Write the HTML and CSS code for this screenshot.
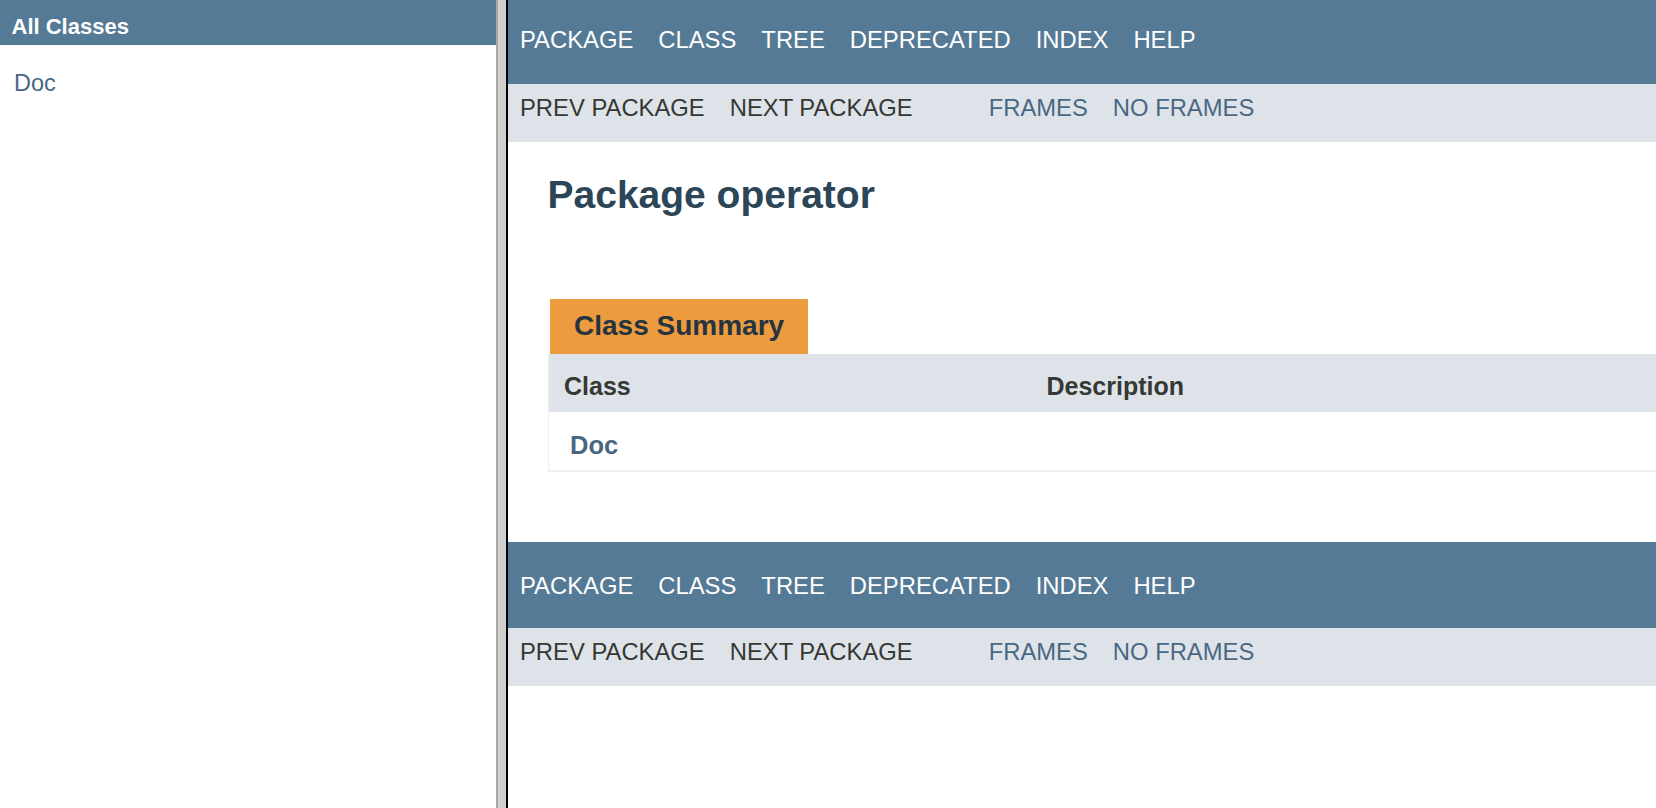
FILE: index.html
```html
<!DOCTYPE html>
<html lang="en">
<head>
<meta charset="utf-8">
<title>operator</title>
<link rel="stylesheet" href="styles.css">
</head>
<body>
<div class="frames">
  <aside class="left">
    <h1 class="bar">All Classes</h1>
    <ul class="classlist">
      <li><a href="#">Doc</a></li>
    </ul>
  </aside>
  <div class="divider"></div>
  <main class="right">
    <div class="topNav">
      <ul class="navList">
        <li><a href="#">Package</a></li>
        <li><a href="#">Class</a></li>
        <li><a href="#">Tree</a></li>
        <li><a href="#">Deprecated</a></li>
        <li><a href="#">Index</a></li>
        <li><a href="#">Help</a></li>
      </ul>
    </div>
    <div class="subNav">
      <ul class="navList">
        <li>Prev Package</li>
        <li>Next Package</li>
      </ul>
      <ul class="navList frames-list">
        <li><a href="#">Frames</a></li>
        <li><a href="#">No Frames</a></li>
      </ul>
    </div>
    <div class="header">
      <h1 class="title">Package operator</h1>
    </div>
    <div class="contentContainer">
      <div class="caption">Class Summary</div>
      <table class="summary">
        <colgroup><col class="c1"><col></colgroup>
        <thead>
          <tr><th>Class</th><th>Description</th></tr>
        </thead>
        <tbody>
          <tr><td class="colFirst"><a href="#">Doc</a></td><td></td></tr>
        </tbody>
      </table>
    </div>
    <div class="bottomNav">
      <ul class="navList">
        <li><a href="#">Package</a></li>
        <li><a href="#">Class</a></li>
        <li><a href="#">Tree</a></li>
        <li><a href="#">Deprecated</a></li>
        <li><a href="#">Index</a></li>
        <li><a href="#">Help</a></li>
      </ul>
    </div>
    <div class="subNav">
      <ul class="navList">
        <li>Prev Package</li>
        <li>Next Package</li>
      </ul>
      <ul class="navList frames-list">
        <li><a href="#">Frames</a></li>
        <li><a href="#">No Frames</a></li>
      </ul>
    </div>
  </main>
</div>
</body>
</html>
```

FILE: styles.css
```css
html, body {
  margin: 0;
  padding: 0;
  background: #ffffff;
}

body {
  font-family: "Liberation Sans", Arial, Helvetica, sans-serif;
  color: #353833;
}

a {
  text-decoration: none;
  color: #4a6782;
}

.frames {
  display: flex;
  height: 100vh;
  overflow: hidden;
}

/* left frame */
.left {
  flex: none;
  width: 496px;
  background: #ffffff;
}

.bar {
  margin: 0;
  height: 45px;
  box-sizing: border-box;
  padding: 14px 0 0 11.5px;
  background: #557a95;
  color: #ffffff;
  font-size: 22px;
  line-height: 25px;
  font-weight: bold;
}

.classlist {
  list-style: none;
  margin: 0;
  padding: 25px 0 0 14px;
  font-size: 23.5px;
  line-height: 27px;
}

/* frame divider */
.divider {
  flex: none;
  width: 8px;
  background: #d0d0d0;
  border-left: 2px solid #a9a9a9;
  border-right: 2px solid #000000;
}

/* right frame */
.right {
  flex: 1;
  min-width: 0;
  overflow: hidden;
}

.navList {
  display: flex;
  gap: 25px;
  list-style: none;
  margin: 0;
  padding: 0;
  font-size: 23.8px;
  line-height: 27px;
  text-transform: uppercase;
  white-space: nowrap;
}

.topNav,
.bottomNav {
  background: #557a95;
  box-sizing: border-box;
  padding-left: 12px;
}

.topNav {
  height: 84px;
  padding-top: 25.5px;
}

.bottomNav {
  height: 86px;
  padding-top: 30px;
  margin-top: 70px;
}

.topNav a,
.bottomNav a {
  color: #ffffff;
}

.subNav {
  display: flex;
  background: #dee3e9;
  height: 58px;
  box-sizing: border-box;
  padding: 10px 0 0 12px;
  color: #353833;
}

.frames-list {
  margin-left: 76px;
}

.title {
  margin: 0;
  padding: 29.7px 0 0 39.5px;
  font-size: 39px;
  line-height: 45px;
  font-weight: bold;
  color: #2c4557;
}

.contentContainer {
  padding: 82px 0 0 40px;
}

.caption {
  display: inline-block;
  margin-left: 2px;
  padding: 11px 24px 12px;
  background: #ed9b3f;
  color: #253441;
  font-size: 28px;
  line-height: 32px;
  font-weight: bold;
  vertical-align: top;
}

.summary {
  width: 1200px;
  table-layout: fixed;
  border-collapse: collapse;
  border-left: 1px solid #eeeeee;
  border-bottom: 2px solid #eeeeee;
}

.summary .c1 {
  width: 483px;
}

.summary th {
  background: #dee3e9;
  text-align: left;
  padding: 18px 6px 11px 15px;
  font-size: 25px;
  line-height: 29px;
  font-weight: bold;
  color: #353833;
}

.summary td {
  padding: 19px 6px 10px 21px;
  font-size: 25.5px;
  line-height: 29px;
  font-weight: bold;
}
```
